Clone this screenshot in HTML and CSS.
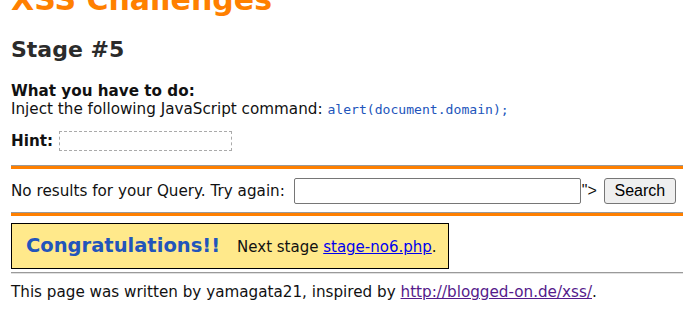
FILE: index.html
```html
<!DOCTYPE html>
<html>
<head>
<meta charset="utf-8">
<title>XSS Challenges (by yamagata21) - Stage #5</title>
<link rel="stylesheet" href="styles.css">
</head>
<body>
<h1 class="site-title">XSS Challenges</h1>
<h2 class="stage-title">Stage #5</h2>
<div class="task">
  <b>What you have to do:</b><br>
  Inject the following JavaScript command: <code class="cmd">alert(document.domain);</code>
</div>
<div class="hint-row">
  <b>Hint:</b><span class="hint-box"></span>
</div>
<hr class="orange">
<form class="search-row">
  <span>No results for your Query. Try again: </span><input class="query" type="text"><span class="quote">"&gt;</span><button class="search-btn" type="button">Search</button>
</form>
<hr class="orange">
<div class="congrats">
  <span class="congrats-title">Congratulations!!</span>
  <span class="next">Next stage <a class="next-link" href="#">stage-no6.php</a>.</span>
</div>
<hr class="gray">
<div class="footer">This page was written by yamagata21, inspired by <a class="visited" href="#">http://blogged-on.de/xss/</a>.</div>
</body>
</html>
```

FILE: styles.css
```css
html, body {
  margin: 0;
  padding: 0;
  background: #fff;
  overflow: hidden;
}
body {
  padding-left: 11px;
  font-family: "DejaVu Sans", Verdana, sans-serif;
  font-size: 15.2px;
  line-height: 18px;
  color: #111;
}
.site-title {
  margin: -18px 0 0 0;
  font-size: 30px;
  line-height: 36px;
  font-weight: bold;
  color: #ff8000;
}
.stage-title {
  margin: 19px 0 0 0;
  font-size: 22px;
  line-height: 26px;
  font-weight: bold;
  color: #2b2b2b;
}
.task {
  margin-top: 19px;
}
.cmd {
  font-family: "DejaVu Sans Mono", "Liberation Mono", monospace;
  font-size: 13.1px;
  color: #2255bb;
}
.hint-row {
  margin-top: 12px;
  display: flex;
  align-items: center;
  height: 20px;
}
.hint-box {
  display: inline-block;
  margin-left: 6px;
  width: 171px;
  height: 18px;
  border: 1px dashed #aaa;
}
hr.orange {
  margin: 14px 0 0 0;
  height: 3px;
  border: 0;
  border-top: 1px solid #999;
  background: #ff8000;
}
.search-row {
  margin: 9px 0 0 0;
  display: flex;
  align-items: center;
  height: 26px;
}
.query {
  box-sizing: border-box;
  margin: 0 0 0 9px;
  width: 287px;
  height: 26px;
  border: 1px solid #767676;
  border-radius: 2px;
  padding: 0 4px;
}
.quote {
  margin-left: 1px;
  font-family: "Liberation Sans", Arial, sans-serif;
  font-size: 16px;
}
.search-btn {
  box-sizing: border-box;
  margin-left: 7px;
  width: 72px;
  height: 26px;
  font-family: "Liberation Sans", Arial, sans-serif;
  font-size: 16px;
  color: #000;
  background: #efefef;
  border: 1px solid #767676;
  border-radius: 3px;
  padding: 0;
}
.search-row + hr.orange {
  margin-top: 8px;
}
.congrats {
  margin-top: 7px;
  box-sizing: border-box;
  width: fit-content;
  height: 46px;
  display: flex;
  align-items: baseline;
  white-space: nowrap;
  padding: 10px 11px 0 14px;
  background: #ffe98b;
  border: 1px solid #000;
}
.congrats-title {
  font-size: 19.5px;
  line-height: 24px;
  font-weight: bold;
  color: #2255bb;
}
.next {
  margin-left: 17px;
  font-size: 15px;
}
.next-link {
  color: #0000ee;
}
hr.gray {
  margin: 3px 0 0 0;
  height: 0;
  border: 0;
  border-top: 1px solid #9a9a9a;
  border-bottom: 1px solid #e0e0e0;
}
.footer {
  margin-top: 9px;
}
.visited {
  color: #551a8b;
}
```
